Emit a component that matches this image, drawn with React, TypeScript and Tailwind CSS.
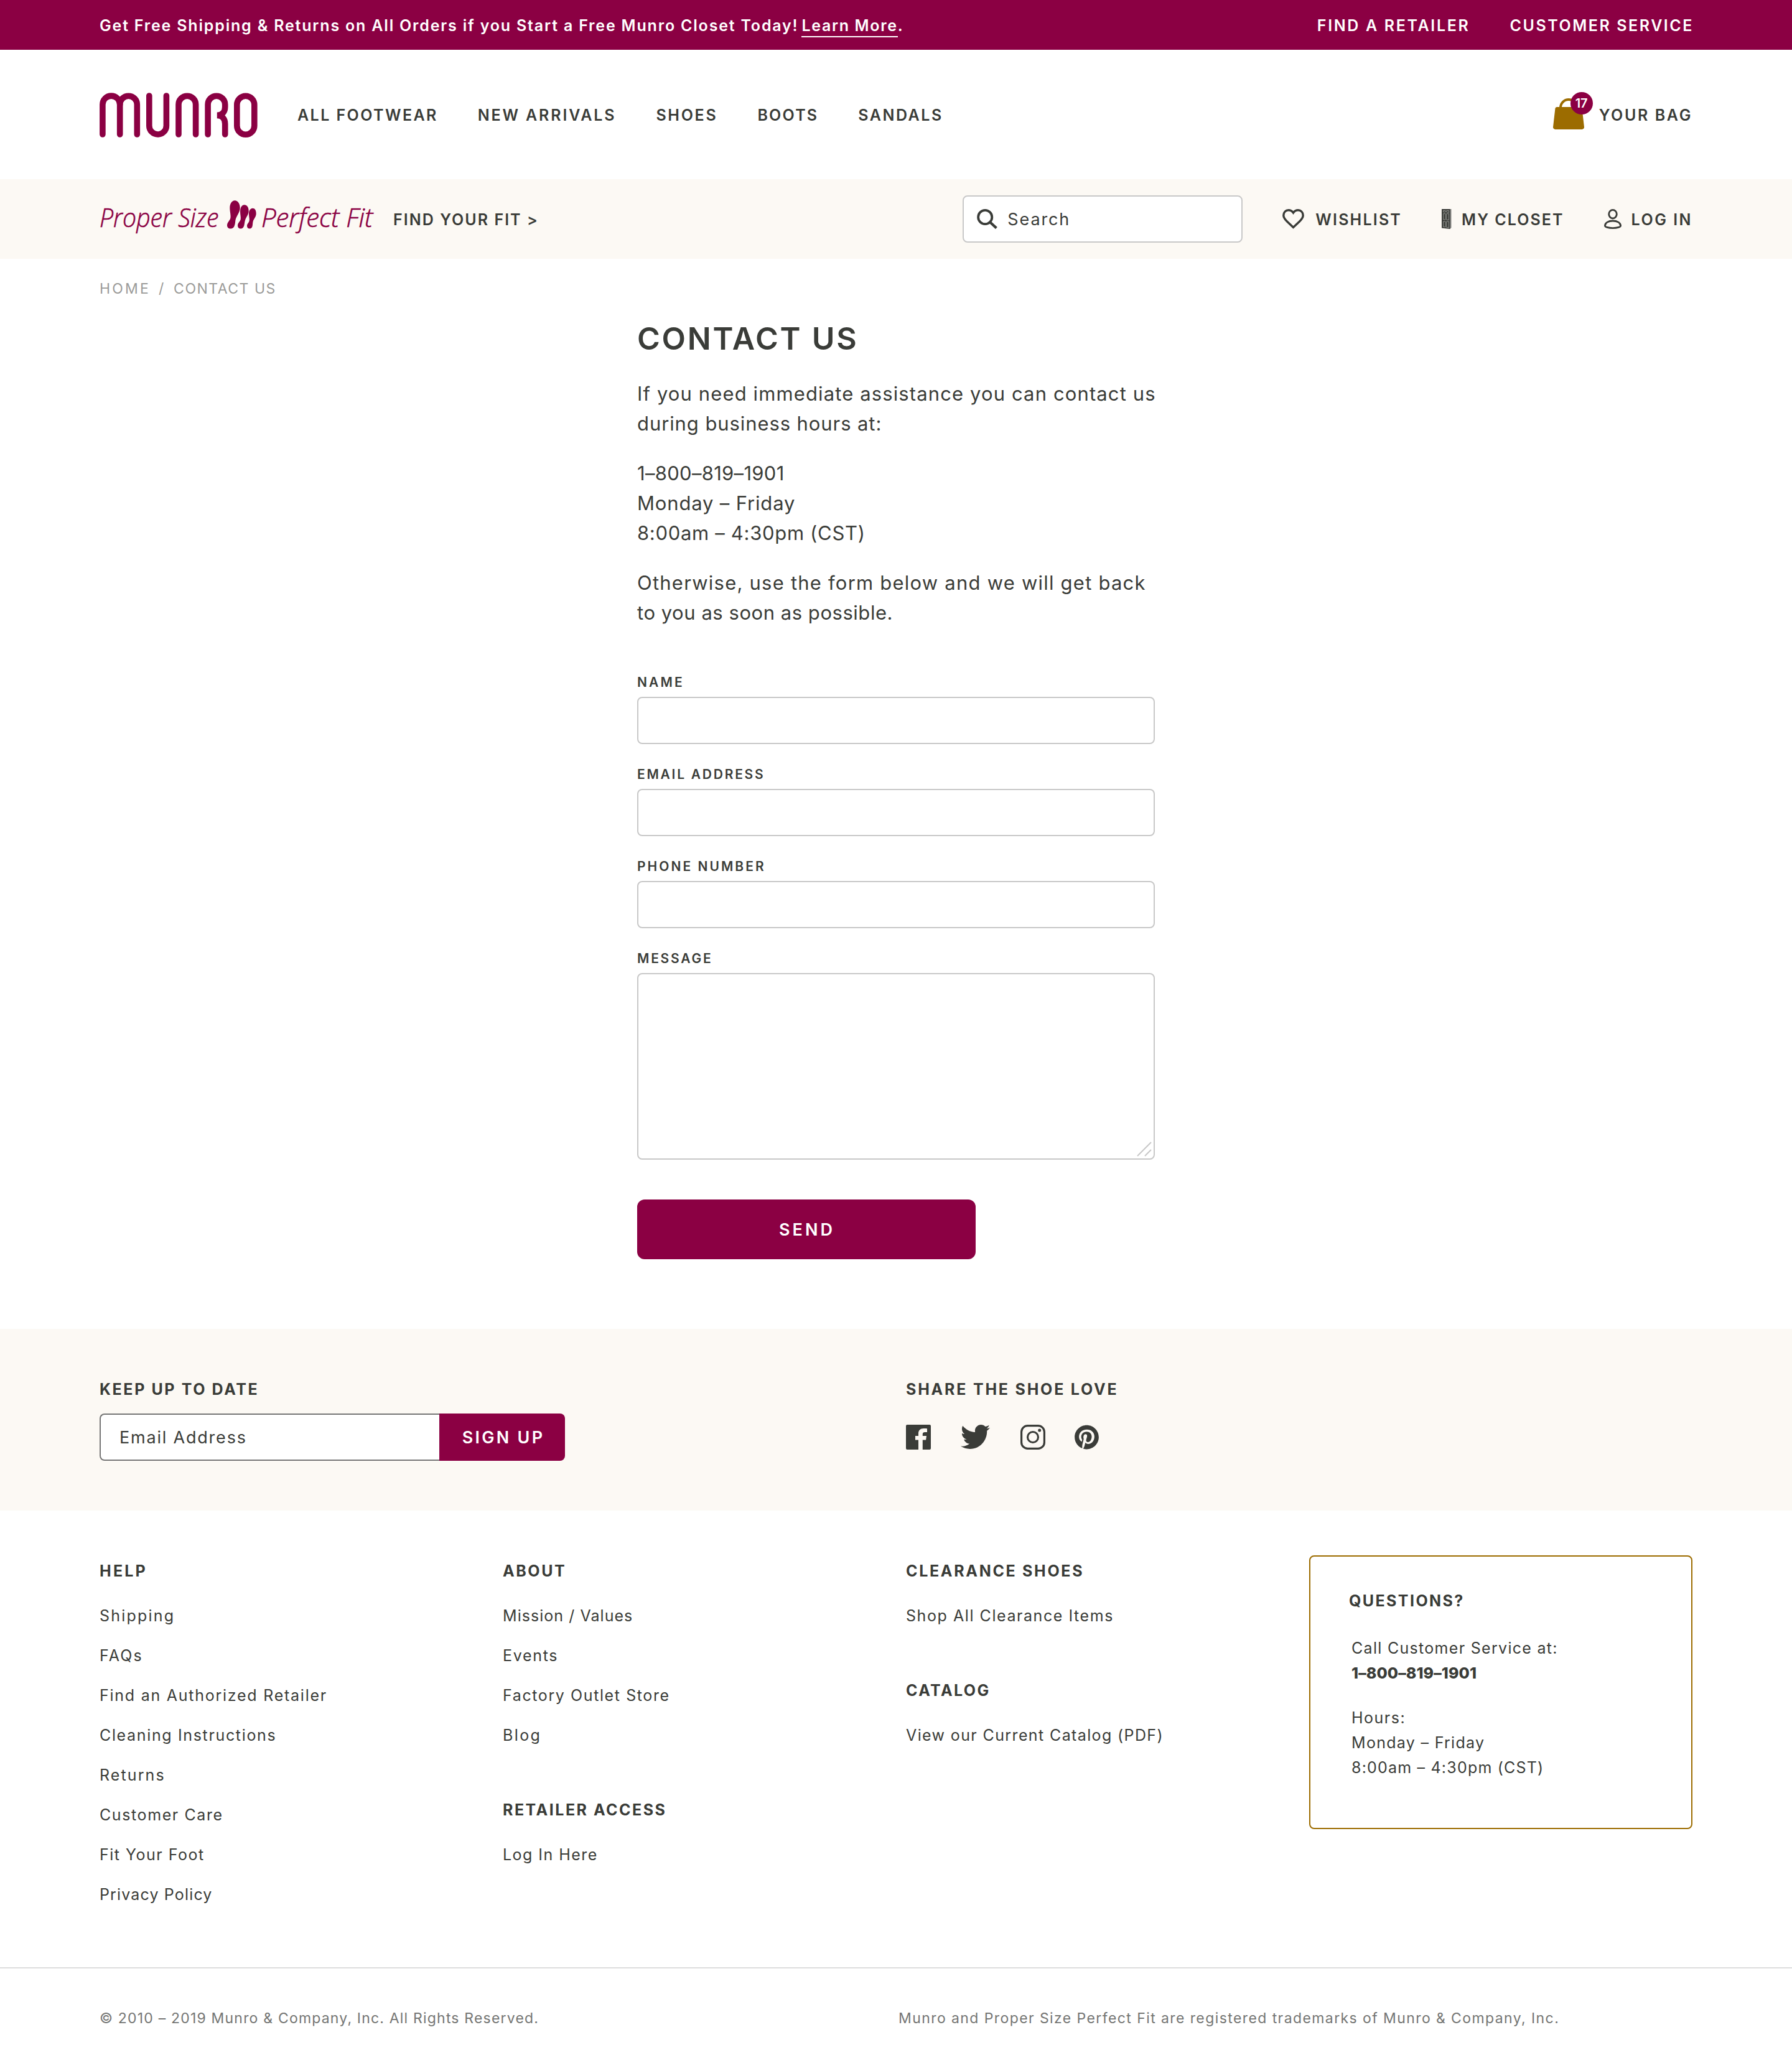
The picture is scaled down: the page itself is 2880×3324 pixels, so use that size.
import React from "react";
import { FaPinterest } from "react-icons/fa";

const INK = "#3a3c38";

function MunroLogo() {
  return (
    <svg width="254" height="72" viewBox="0 0 254 72" fill="none" stroke="#8b0043" strokeWidth="9.6" strokeLinecap="round" aria-label="Munro">
      <path d="M4.9 67V19a13.9 13.9 0 0 1 27.8 0V67" />
      <path d="M32.7 19a13.8 13.8 0 0 1 27.6 0V67" />
      <path d="M79.8 5V53.2a13.8 13.8 0 0 0 27.6 0V5" />
      <path d="M127 67V19a13.8 13.8 0 0 1 27.6 0V67" />
      <path d="M174.1 67V19a13.8 13.8 0 0 1 27.6 0V23C201.7 31 197 36.4 188.8 36.4C197 36.4 201.7 42 201.7 50V67" />
      <rect x="220.8" y="5.2" width="28" height="62" rx="14" />
    </svg>
  );
}

function FeetMark() {
  return (
    <svg width="47" height="46" viewBox="675 66 141 137" fill="#8b0043">
      <path d="M712 66C727 66 737 82 737 102C737 122 724 136 718 152C713 164 716 172 711 186C708 197 701 202 692 202C681 202 675 195 675 186C675 172 688 164 691 152C694 138 688 120 688 102C688 82 698 66 712 66Z" />
      <path d="M758 87C771 87 779 98 779 117C779 134 767 146 763 158C759 168 760 176 757 187C754 197 749 202 741 202C732 202 726 196 726 187C726 175 737 169 740 158C742 147 738 135 738 120C738 100 746 87 758 87Z" />
      <path d="M798 104C809 104 815 114 815 129C815 145 804 154 801 164C798 172 799 180 797 189C795 198 790 202 784 202C776 202 771 197 771 189C771 179 780 174 782 164C784 155 780 145 780 131C780 115 787 104 798 104Z" />
    </svg>
  );
}

function BagIcon() {
  return (
    <svg width="50" height="50" viewBox="0 0 50 50">
      <path d="M12 17V15a13 13 0 0 1 26 0V17" fill="none" stroke="#9c6c00" strokeWidth="4" />
      <path d="M6.4 14H43.6a3 3 0 0 1 3 2.7L50 46.2a3.5 3.5 0 0 1-3.5 3.8H3.5A3.5 3.5 0 0 1 0 46.2L3.4 16.7a3 3 0 0 1 3-2.7Z" fill="#9c6c00" />
    </svg>
  );
}

function SearchIcon() {
  return (
    <svg width="33" height="32" viewBox="0 0 33 32" fill="none" stroke={INK} strokeWidth="3.8">
      <circle cx="13.2" cy="13" r="11.1" />
      <path d="M21 21L31.4 30.6" strokeWidth="4.2" />
    </svg>
  );
}

function HeartIcon() {
  return (
    <svg width="35" height="32" viewBox="0 0 35 32" fill="none" stroke={INK} strokeWidth="3.4">
      <path d="M17.5 29.5L7.5 20C3.8 16.5 1.8 13.5 1.8 10C1.8 5.2 5.3 1.8 9.7 1.8C13 1.8 15.6 3.3 17.5 6C19.4 3.3 22 1.8 25.3 1.8C29.7 1.8 33.2 5.2 33.2 10C33.2 13.5 31.2 16.5 27.5 20Z" />
    </svg>
  );
}

function ClosetIcon() {
  return (
    <svg width="16" height="32" viewBox="0 0 16 32" fill="none">
      <path d="M0 0H13V32L0 30.5Z" fill={INK} />
      <path d="M13 0H15.5V30L13 32Z" fill="#8b8c89" />
      <path d="M13.3 0V32" stroke={INK} strokeWidth="0.8" />
      <g stroke="#a3a4a1" strokeWidth="0.8">
        <path d="M2.5 2.5H6V5H2.5ZM7.8 2.5H11.5V5.5L7.8 5Z" />
        <path d="M2.5 7.5H6V17H2.5ZM7.8 7.5H11.5V17.5H7.8Z" />
        <path d="M2.5 20H6V29L2.5 28.6ZM7.8 20H11.5V30L7.8 29.5Z" />
      </g>
    </svg>
  );
}

function UserIcon() {
  return (
    <svg width="28" height="32" viewBox="0 0 28 32" fill="none" stroke={INK} strokeWidth="2.8">
      <ellipse cx="14" cy="8.2" rx="6.3" ry="6.8" />
      <path d="M1.4 27C1.4 22 7 19 14 19C21 19 26.6 22 26.6 27C26.6 28.6 21.5 30.6 14 30.6C6.5 30.6 1.4 28.6 1.4 27Z" />
    </svg>
  );
}

function FacebookIcon() {
  return (
    <svg width="40" height="40" viewBox="0 0 40 40" fill={INK}>
      <path d="M2 0H38a2 2 0 0 1 2 2V38a2 2 0 0 1-2 2H26.8V24.4H32.1L33 18H26.8V15.5C26.8 13.3 27.6 12 30.5 12H34V6.3C32.5 6.1 30.5 6 28.5 6C23 6 20 9 20 14V18H15V24.4H20V40H2a2 2 0 0 1-2-2V2a2 2 0 0 1 2-2Z" />
    </svg>
  );
}

function TwitterIcon() {
  return (
    <svg width="47" height="39" viewBox="0 48 512 416" preserveAspectRatio="none" fill={INK}>
      <path d="M459.37 151.716c.325 4.548.325 9.097.325 13.645 0 138.72-105.583 298.558-298.558 298.558-59.452 0-114.68-17.219-161.137-47.106 8.447.974 16.568 1.299 25.34 1.299 49.055 0 94.213-16.568 130.274-44.832-46.132-.975-84.792-31.188-98.112-72.772 6.498.974 12.995 1.624 19.818 1.624 9.421 0 18.843-1.3 27.614-3.573-48.081-9.747-84.143-51.98-84.143-102.985v-1.299c13.969 7.797 30.214 12.67 47.431 13.319-28.264-18.843-46.781-51.005-46.781-87.391 0-19.492 5.197-37.36 14.294-52.954 51.655 63.675 129.3 105.258 216.365 109.807-1.624-7.797-2.599-15.918-2.599-24.04 0-57.828 46.782-104.934 104.934-104.934 30.213 0 57.502 12.67 76.67 33.137 23.715-4.548 46.456-13.32 66.599-25.34-7.798 24.366-24.366 44.833-46.132 57.827 21.117-2.273 41.584-8.122 60.426-16.243-14.292 20.791-32.161 39.308-52.628 54.253z" />
    </svg>
  );
}

function InstagramIcon() {
  return (
    <svg width="40" height="40" viewBox="0 0 40 40" fill="none" stroke={INK}>
      <rect x="1.6" y="1.6" width="36.8" height="36.8" rx="10" strokeWidth="3.2" />
      <circle cx="20" cy="20" r="8.5" strokeWidth="3.1" />
      <circle cx="30.7" cy="9" r="2.5" fill={INK} stroke="none" />
    </svg>
  );
}

const nav = [
  { label: "ALL FOOTWEAR", cls: "tracking-[2.42px]" },
  { label: "NEW ARRIVALS", cls: "tracking-[2.84px]" },
  { label: "SHOES", cls: "tracking-[2.7px]" },
  { label: "BOOTS", cls: "tracking-[2.2px]" },
  { label: "SANDALS", cls: "tracking-[2.5px]" },
];

const fields = [
  { label: "NAME", cls: "tracking-[3.14px]" },
  { label: "EMAIL ADDRESS", cls: "tracking-[2.75px]" },
  { label: "PHONE NUMBER", cls: "tracking-[3.03px]" },
];

type Link = { label: string; cls: string };

function LinkGroup({ title, titleCls, links, className = "" }: { title: string; titleCls: string; links: Link[]; className?: string }) {
  return (
    <section className={className}>
      <h3 className={`text-[25px] leading-[34px] font-bold ${titleCls}`}>{title}</h3>
      <ul className="mt-[23px]">
        {links.map((l) => (
          <li key={l.label} className={`text-[25px] leading-[64px] whitespace-nowrap ${l.cls}`}>
            {l.label}
          </li>
        ))}
      </ul>
    </section>
  );
}

const help: Link[] = [
  { label: "Shipping", cls: "tracking-[2.2px]" },
  { label: "FAQs", cls: "tracking-[2.2px]" },
  { label: "Find an Authorized Retailer", cls: "tracking-[1.75px]" },
  { label: "Cleaning Instructions", cls: "tracking-[1.65px]" },
  { label: "Returns", cls: "tracking-[2.1px]" },
  { label: "Customer Care", cls: "tracking-[1.6px]" },
  { label: "Fit Your Foot", cls: "tracking-[1.5px]" },
  { label: "Privacy Policy", cls: "tracking-[1.15px]" },
];
const about: Link[] = [
  { label: "Mission / Values", cls: "tracking-[1.05px]" },
  { label: "Events", cls: "tracking-[1.7px]" },
  { label: "Factory Outlet Store", cls: "tracking-[1.6px]" },
  { label: "Blog", cls: "tracking-[2.4px]" },
];

export default function App() {
  return (
    <div className="min-h-[3324px] w-full bg-white font-['Inter',sans-serif] text-[#3a3c38]">
      <div className="flex h-20 items-center bg-[#8b0043] px-40 pt-0.5 text-[25px] leading-[34px] font-semibold text-white">
        <p className="flex whitespace-nowrap">
          <span className="tracking-[1.81px]">Get Free Shipping &amp; Returns on All Orders if you Start a Free Munro Closet Today!</span>
          <a className="ml-[5px] tracking-[1.65px] shadow-[0_2px_0_#fff]">Learn More</a>
          <span>.</span>
        </p>
        <nav className="-mr-0.5 ml-auto flex gap-16">
          <a className="tracking-[2.65px]">FIND A RETAILER</a>
          <a className="tracking-[2.55px]">CUSTOMER SERVICE</a>
        </nav>
      </div>

      <header className="flex h-[208px] items-center px-40 pt-0.5 text-[25px] leading-[34px] font-semibold">
        <MunroLogo />
        <nav className="ml-16 flex gap-16">
          {nav.map((n) => (
            <a key={n.label} className={n.cls}>{n.label}</a>
          ))}
        </nav>
        <a className="ml-auto flex items-center gap-6">
          <span className="relative mb-1 block size-[50px]">
            <BagIcon />
            <span className="absolute -top-2.5 left-7 flex size-9 items-center justify-center rounded-full bg-[#8b0043] text-[20px] leading-none font-semibold text-white">17</span>
          </span>
          <span className="tracking-[2.61px]">YOUR BAG</span>
        </a>
      </header>

      <div className="flex h-32 items-center bg-[#fcf9f4] px-40 text-[25px] leading-[34px] font-semibold">
        <div className="flex w-[448px] items-center font-['Open_Sans'] text-[42px] leading-[58px] font-light whitespace-nowrap text-[#8b0043] italic [-webkit-text-stroke:0.6px_#8b0043]">
          <span className="w-[205px] origin-left scale-x-[0.935] pb-[7px]">Proper Size</span>
          <span className="mb-[14px] w-[55px]"><FeetMark /></span>
          <span className="pb-[7px]">Perfect Fit</span>
        </div>
        <a className="ml-6 pt-0.5 tracking-[2.04px]">FIND YOUR FIT &gt;</a>

        <div className="ml-auto flex items-center gap-16">
          <div className="flex h-[76px] w-[450px] items-center gap-4 rounded-lg border-2 border-[#c8c8c8] bg-white pl-[21px]">
            <SearchIcon />
            <span className="pt-0.5 text-[27px] font-normal tracking-[1.87px]">Search</span>
          </div>
          <a className="flex items-center gap-[18px]">
            <HeartIcon />
            <span className="pt-0.5 tracking-[2.19px]">WISHLIST</span>
          </a>
          <a className="flex items-center gap-4">
            <ClosetIcon />
            <span className="pt-0.5 tracking-[2.04px]">MY CLOSET</span>
          </a>
          <a className="flex items-center gap-4">
            <UserIcon />
            <span className="pt-0.5 tracking-[2.48px]">LOG IN</span>
          </a>
        </div>
      </div>

      <div className="flex px-40 pt-8 text-[23px] leading-8 text-[#9b9b99]">
        <a className="mr-[13px] tracking-[3.2px]">HOME</a>
        <span className="w-6">/</span>
        <span className="tracking-[1.5px]">CONTACT US</span>
      </div>

      <main className="mx-auto mt-8 w-[832px] pb-28">
        <h1 className="text-[50px] leading-[64px] font-semibold tracking-[2.75px]">CONTACT US</h1>
        <div className="mt-[33px] space-y-8 text-[31px] leading-[48px] whitespace-nowrap">
          <p>
            <span className="block tracking-[1.12px]">If you need immediate assistance you can contact us</span>
            <span className="block tracking-[0.91px]">during business hours at:</span>
          </p>
          <p>
            <span className="block tracking-[0.3px]">1–800–819–1901</span>
            <span className="block tracking-[0.84px]">Monday – Friday</span>
            <span className="block tracking-[0.68px]">8:00am – 4:30pm (CST)</span>
          </p>
          <p>
            <span className="block tracking-[1.22px]">Otherwise, use the form below and we will get back</span>
            <span className="block tracking-[0.54px]">to you as soon as possible.</span>
          </p>
        </div>

        <form className="mt-[71px] flex flex-col">
          {fields.map((f) => (
            <label key={f.label} className="mb-8 block">
              <span className={`block pt-px text-[21px] leading-8 font-semibold ${f.cls}`}>{f.label}</span>
              <span className="mt-[7px] block h-[76px] rounded-lg border-2 border-[#c8c8c8] bg-white" />
            </label>
          ))}
          <label className="block">
            <span className="block pt-px text-[21px] leading-8 font-semibold tracking-[2.77px]">MESSAGE</span>
            <span className="mt-[7px] flex h-[300px] items-end justify-end rounded-lg border-2 border-[#c8c8c8] bg-white pr-[3px] pb-[3px]">
              <svg width="24" height="24" viewBox="0 0 24 24" fill="none" stroke="#c8c8c8" strokeWidth="2">
                <path d="M1 23L23 1M13 23L23 13" />
              </svg>
            </span>
          </label>
          <button type="button" className="mt-16 h-24 w-[544px] rounded-xl bg-[#8b0043] pt-0.5 pl-0.5 text-[27px] font-semibold tracking-[4.03px] text-white">SEND</button>
        </form>
      </main>

      <section className="grid h-[292px] grid-cols-2 gap-8 bg-[#fcf9f4] px-40 pt-20">
        <div>
          <h3 className="text-[25px] leading-[34px] font-bold tracking-[2.6px]">KEEP UP TO DATE</h3>
          <div className="mt-[22px] flex h-[76px] w-[748px]">
            <div className="flex w-[546px] items-center rounded-l-lg border-2 border-r-0 border-[#767676] bg-white pt-0.5 pl-[30px] text-[27px] tracking-[1.8px]">Email Address</div>
            <button type="button" className="w-[202px] rounded-r-lg bg-[#8b0043] pt-0.5 pl-[4px] text-[27px] font-semibold tracking-[3.26px] text-white">SIGN UP</button>
          </div>
        </div>
        <div>
          <h3 className="text-[25px] leading-[34px] font-bold tracking-[2.78px]">SHARE THE SHOE LOVE</h3>
          <div className="mt-10 flex items-start">
            <FacebookIcon />
            <span className="ml-12"><TwitterIcon /></span>
            <span className="ml-[49px]"><InstagramIcon /></span>
            <FaPinterest className="ml-[47px] h-[40px] w-[39px]" color={INK} />
          </div>
        </div>
      </section>

      <footer>
        <div className="grid h-[734px] grid-cols-4 gap-8 px-40 pt-[72px]">
          <LinkGroup className="pt-2" title="HELP" titleCls="tracking-[3.2px]" links={help} />
          <div className="pt-2">
            <LinkGroup title="ABOUT" titleCls="tracking-[2.56px]" links={about} />
            <LinkGroup className="mt-[71px]" title="RETAILER ACCESS" titleCls="tracking-[2.5px]" links={[{ label: "Log In Here", cls: "tracking-[1.45px]" }]} />
          </div>
          <div className="pt-2">
            <LinkGroup title="CLEARANCE SHOES" titleCls="tracking-[2.68px]" links={[{ label: "Shop All Clearance Items", cls: "tracking-[1.56px]" }]} />
            <LinkGroup className="mt-[71px]" title="CATALOG" titleCls="tracking-[2.4px]" links={[{ label: "View our Current Catalog (PDF)", cls: "tracking-[1.38px]" }]} />
          </div>
          <aside className="h-[440px] rounded-lg border-2 border-[#9c6c00] pt-[54px] pl-[62px] text-[25px] leading-10">
            <h3 className="leading-[34px] font-bold tracking-[2.4px]">QUESTIONS?</h3>
            <p className="mt-[39px] ml-1">
              <span className="block tracking-[1.3px]">Call Customer Service at:</span>
              <span className="block font-extrabold tracking-[0.09px]">1–800–819–1901</span>
            </p>
            <p className="mt-8 ml-1">
              <span className="block tracking-[1.5px]">Hours:</span>
              <span className="block tracking-[1.3px]">Monday – Friday</span>
              <span className="block tracking-[1.2px]">8:00am – 4:30pm (CST)</span>
            </p>
          </aside>
        </div>
        <div className="flex h-[162px] items-center border-t-2 border-[#dddddd] px-40 text-[23px] leading-8 text-[#757674]">
          <p className="w-[1284px] tracking-[1.19px]">© 2010 – 2019 Munro &amp; Company, Inc. All Rights Reserved.</p>
          <p className="tracking-[1.41px]">Munro and Proper Size Perfect Fit are registered trademarks of Munro &amp; Company, Inc.</p>
        </div>
      </footer>
    </div>
  );
}
